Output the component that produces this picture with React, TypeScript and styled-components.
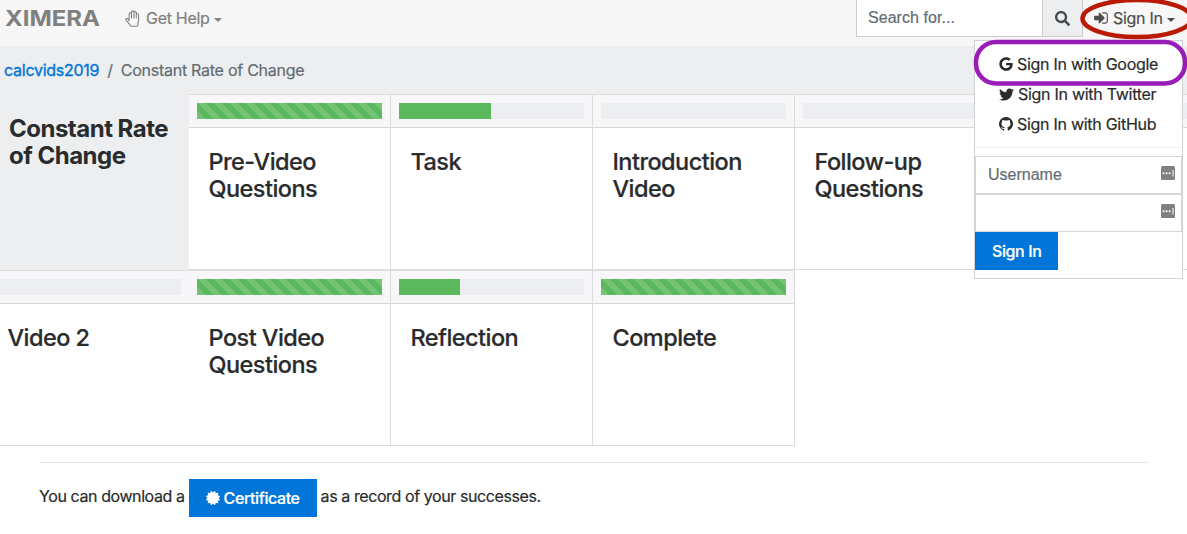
import React from 'react';
import styled, { createGlobalStyle, css } from 'styled-components';
import { FaCertificate, FaGoogle, FaSearch, FaTwitter } from 'react-icons/fa';

const GlobalStyle = createGlobalStyle`
  *, *::before, *::after { box-sizing: border-box; }
  body {
    margin: 0;
    background: #fff;
    color: #292b2c;
    font: 400 16px/24px Inter, 'Liberation Sans', sans-serif;
    letter-spacing: -0.3px;
    -webkit-text-stroke: 0.2px currentColor;
    overflow: hidden;
  }
`;

const Page = styled.div`
  position: relative;
  width: 1187px;
  height: 534px;
  overflow: hidden;
`;

const Navbar = styled.nav`
  display: flex;
  align-items: flex-start;
  height: 46px;
  padding-left: 5px;
  background: #f7f7f7;
`;

const Logo = styled.svg`
  display: block;
  width: 96px;
  height: 36px;
  fill: #808080;
`;

const NavLink = styled.a<{ $strong?: boolean }>`
  display: flex;
  align-items: center;
  height: 36px;
  color: ${(p) => (p.$strong ? '#4d4d4d' : '#808080')};
  white-space: nowrap;
`;

const HelpLink = styled(NavLink)`
  margin-left: 24px;
  gap: 4px;
`;

const SignInLink = styled(NavLink)`
  margin-left: 10px;
  gap: 4px;
`;

const Caret = styled.span`
  border: 4px solid transparent;
  border-top: 4.5px solid currentColor;
  border-bottom: 0;
  margin-top: 3px;
`;

const SearchGroup = styled.div`
  display: flex;
  width: 227px;
  height: 37px;
  margin-left: auto;
  border: 1px solid #cccccc;
  border-top: 0;
`;

const SearchField = styled.div`
  flex: 1;
  padding: 6px 11px;
  background: #fff;
  color: #636c72;
  font-family: 'Liberation Sans', sans-serif;
  letter-spacing: 0.05px;
`;

const SearchButton = styled.div`
  display: flex;
  align-items: center;
  justify-content: center;
  width: 40px;
  border-left: 1px solid #cccccc;
  background: #eceeef;
  color: #464a4c;
`;

const NavEnd = styled.div`
  width: 104px;
`;

const Breadcrumb = styled.div`
  display: flex;
  gap: 8px;
  height: 48px;
  padding: 12px 4px;
  background: #eceeef;
  color: #636c72;
  letter-spacing: -0.26px;
`;

const Crumb = styled.a`
  color: #0275d8;
  -webkit-text-stroke-width: 0.35px;
`;

const CardRow = styled.div`
  display: flex;
  width: 1400px;
  height: 176px;
`;

const ChapterCell = styled.div`
  width: 189px;
  padding: 21px 9px;
  background: #eceeef;
`;

const Chapter = styled.h1`
  margin: 0;
  font-size: 24px;
  line-height: 27px;
  font-weight: 700;
  letter-spacing: -0.5px;
  -webkit-text-stroke-width: 0;
`;

const CardBox = styled.div<{ $cut?: boolean }>`
  width: ${(p) => (p.$cut ? 189 : 202)}px;
  border: solid #dcdcdd;
  border-width: ${(p) => (p.$cut ? '1px 0' : '1px 1px 1px 0')};
  background: #fff;
`;

const CardHeader = styled.div<{ $cut?: boolean }>`
  height: 33px;
  padding: 8px;
  ${(p) => p.$cut && css`padding-left: 0;`}
  border-bottom: 1px solid #d8d8d9;
  background: #f7f7f9;
`;

const Track = styled.div`
  height: 16px;
  background: #eceeef;
`;

const Fill = styled.div<{ $striped: boolean }>`
  height: 16px;
  background-color: #5cb85c;
  ${(p) =>
    p.$striped &&
    css`
      background-image: linear-gradient(
        45deg,
        rgba(255, 255, 255, 0.15) 25%,
        transparent 25%,
        transparent 50%,
        rgba(255, 255, 255, 0.15) 50%,
        rgba(255, 255, 255, 0.15) 75%,
        transparent 75%
      );
      background-size: 16px 16px;
    `}
`;

const CardTitle = styled.h4<{ $cut?: boolean }>`
  margin: 0;
  padding: 20px ${(p) => (p.$cut ? 7.5 : 19.5)}px;
  font-size: 23.5px;
  line-height: 27px;
  font-weight: 500;
  letter-spacing: -0.55px;
`;

const Footer = styled.footer`
  display: flex;
  align-items: center;
  gap: 4px;
  margin: 16px 38px 0 39px;
  padding-top: 16px;
  border-top: 1px solid #e5e5e5;
  letter-spacing: -0.41px;
`;

const FooterText = styled.span`
  margin-bottom: 4px;
`;

const Button = styled.button`
  display: inline-flex;
  align-items: center;
  gap: 4px;
  height: 38px;
  padding: 0 17px 1px;
  border: 0;
  background: #0275d8;
  color: #fff;
  font: inherit;
  font-weight: 500;
  letter-spacing: -0.4px;
  -webkit-text-stroke: 0.2px #fff;
`;

const Menu = styled.div`
  position: absolute;
  left: 974px;
  top: 40px;
  width: 209px;
  height: 239px;
  padding-top: 8px;
  border: 1px solid #d0d1d2;
  background: #fff;
`;

const MenuItem = styled.a`
  display: flex;
  align-items: center;
  gap: 4px;
  height: 30px;
  padding-left: 24px;
  white-space: nowrap;
  letter-spacing: -0.28px;
`;

const Divider = styled.div`
  height: 1px;
  margin: 8px 0;
  background: #eceeef;
`;

const Field = styled.div`
  display: flex;
  justify-content: space-between;
  height: 38px;
  padding: 6px 6px 0 12px;
  border: 1px solid #d5d6d7;
  color: #636c72;
  font-family: 'Liberation Sans', sans-serif;
  letter-spacing: 0;
`;

const KeyIcon = styled.svg`
  width: 14px;
  height: 14px;
  margin-top: 3px;
`;

const Annotations = styled.svg`
  position: absolute;
  left: 970px;
  top: 0;
`;

const HandGlyph = () => (
  <svg width="17" height="17" viewBox="0.300 0 16 16" fill="none" stroke="currentColor" strokeWidth="1" strokeLinecap="round" strokeLinejoin="round">
    <path d="M4.200 10V3.600a1.100 1.100 0 0 1 2.200 0V7.500M6.400 7.500V2a1.150 1.150 0 0 1 2.300 0V7.500M8.700 7.500V2.600a1.100 1.100 0 0 1 2.200 0V7.500M10.900 7.500V4.600a1.100 1.100 0 0 1 2.200 0v5.100c0 1-.6 1.900-.7 2.800V14.300a1 1 0 0 1-1 1H6.200c-.7 0-.9-.4-1-.9C5 13.200 2.300 10.900 1.300 9.500c-.8-1.200.8-2.300 1.700-1.200L4.200 10" />
  </svg>
);

const SignInGlyph = () => (
  <svg width="16" height="16" viewBox="0 0 1792 1792" fill="currentColor">
    <path d="M1312 896q0 26-19 45l-544 544q-19 19-45 19t-45-19-19-45v-288h-448q-26 0-45-19t-19-45v-384q0-26 19-45t45-19h448v-288q0-26 19-45t45-19 45 19l544 544q19 19 19 45zm352-352v704q0 119-84.500 203.500t-203.500 84.500h-320q-13 0-22.500-9.500t-9.500-22.500q0-4-1-20t-.5-26.500 3-23.500 10-19.500 20.500-6.500h320q66 0 113-47t47-113v-704q0-66-47-113t-113-47h-312l-11.500-1-11.500-3-8-5.500-7-9-2-13.500q0-4-1-20t-.5-26.500 3-23.500 10-19.500 20.500-6.500h320q119 0 203.500 84.500t84.500 203.500z" />
  </svg>
);

const GithubGlyph = () => (
  <svg width="14" height="14" viewBox="128 128 1536 1536" fill="currentColor">
    <path d="M896 128q209 0 385.500 103t279.500 279.500 103 385.500q0 251-146.500 451.500t-378.500 277.500q-27 5-40-7t-13-30q0-3 .5-76.500t.5-134.500q0-97-52-142 57-6 102.500-18t94-39 81-66.500 53-105 20.500-150.500q0-119-79-206 37-91-8-204-28-9-81 11t-92 44l-38 24q-93-26-192-26t-192 26q-16-11-42.500-27t-83.500-38.500-85-13.500q-45 113-8 204-79 87-79 206 0 85 20.500 150t52.500 105 80.500 67 94 39 102.500 18q-39 36-49 103-21 10-45 15t-57 5-65.500-21.500-55.500-62.500q-19-32-48.500-52t-49.500-24l-20-3q-21 0-29 4.500t-5 11.500 9 14 13 12l7 5q22 10 43.500 38t31.500 51l10 23q13 38 44 61.500t67 30 69.500 7 55.500-3.500l23-4q0 38 .5 88.500t.5 54.500q0 18-13 30t-40 7q-232-77-378.500-277.500t-146.500-451.500q0-209 103-385.500t279.500-279.500 385.500-103z" />
  </svg>
);

const ManagerGlyph = () => (
  <KeyIcon viewBox="0 0 14 14">
    <rect width="14" height="14" rx="1.500" fill="#808080" />
    <circle cx="2.600" cy="7.200" r="1" fill="#fff" />
    <circle cx="5.600" cy="7.200" r="1" fill="#fff" />
    <circle cx="8.600" cy="7.200" r="1" fill="#fff" />
    <rect x="11.500" y="4" width="1" height="6.500" fill="#fff" />
  </KeyIcon>
);

type CardData = { title: string; progress: number; cut?: boolean };

const firstRow: CardData[] = [
  { title: 'Pre-Video Questions', progress: 100 },
  { title: 'Task', progress: 49.7 },
  { title: 'Introduction Video', progress: 0 },
  { title: 'Follow-up Questions', progress: 0 },
  { title: '', progress: 0 },
];

const secondRow: CardData[] = [
  { title: 'Video 2', progress: 0, cut: true },
  { title: 'Post Video Questions', progress: 100 },
  { title: 'Reflection', progress: 33 },
  { title: 'Complete', progress: 100 },
];

const Card = ({ title, progress, cut }: CardData) => (
  <CardBox $cut={cut}>
    <CardHeader $cut={cut}>
      <Track>
        <Fill $striped={progress === 100} style={{ width: `${progress}%` }} />
      </Track>
    </CardHeader>
    <CardTitle $cut={cut}>{title}</CardTitle>
  </CardBox>
);

export default function App() {
  return (
    <Page>
      <GlobalStyle />
      <Navbar>
        <Logo viewBox="0 0 96 36">
          <text x="0" y="25.700" fontSize="21.500" fontWeight="700" letterSpacing="0" textLength="95" lengthAdjust="spacingAndGlyphs">
            XIMERA
          </text>
        </Logo>
        <HelpLink>
          <HandGlyph />
          <span>Get Help</span>
          <Caret />
        </HelpLink>
        <SearchGroup>
          <SearchField>Search for...</SearchField>
          <SearchButton>
            <FaSearch size={15} />
          </SearchButton>
        </SearchGroup>
        <NavEnd>
          <SignInLink $strong>
            <SignInGlyph />
            <span>Sign In</span>
            <Caret />
          </SignInLink>
        </NavEnd>
      </Navbar>
      <Breadcrumb>
        <Crumb>calcvids2019</Crumb>
        <span>/</span>
        <span>Constant Rate of Change</span>
      </Breadcrumb>
      <CardRow>
        <ChapterCell>
          <Chapter>Constant Rate of Change</Chapter>
        </ChapterCell>
        {firstRow.map((c, i) => (
          <Card key={i} {...c} />
        ))}
      </CardRow>
      <CardRow>
        {secondRow.map((c) => (
          <Card key={c.title} {...c} />
        ))}
      </CardRow>
      <Footer>
        <FooterText>You can download a</FooterText>
        <Button>
          <FaCertificate size={14} />
          <span>Certificate</span>
        </Button>
        <FooterText>as a record of your successes.</FooterText>
      </Footer>
      <Menu>
        <MenuItem>
          <FaGoogle size={14} />
          <span>Sign In with Google</span>
        </MenuItem>
        <MenuItem>
          <FaTwitter size={15} />
          <span>Sign In with Twitter</span>
        </MenuItem>
        <MenuItem>
          <GithubGlyph />
          <span>Sign In with GitHub</span>
        </MenuItem>
        <Divider />
        <Field>
          <span>Username</span>
          <ManagerGlyph />
        </Field>
        <Field>
          <span />
          <ManagerGlyph />
        </Field>
        <Button>Sign In</Button>
      </Menu>
      <Annotations width="217" height="90" fill="none">
        <ellipse cx="167" cy="18.500" rx="54.500" ry="18.500" stroke="#b81a04" strokeWidth="4.500" />
        <rect x="6" y="42" width="209" height="41.500" rx="20" stroke="#9a1cb8" strokeWidth="4.500" />
      </Annotations>
    </Page>
  );
}
